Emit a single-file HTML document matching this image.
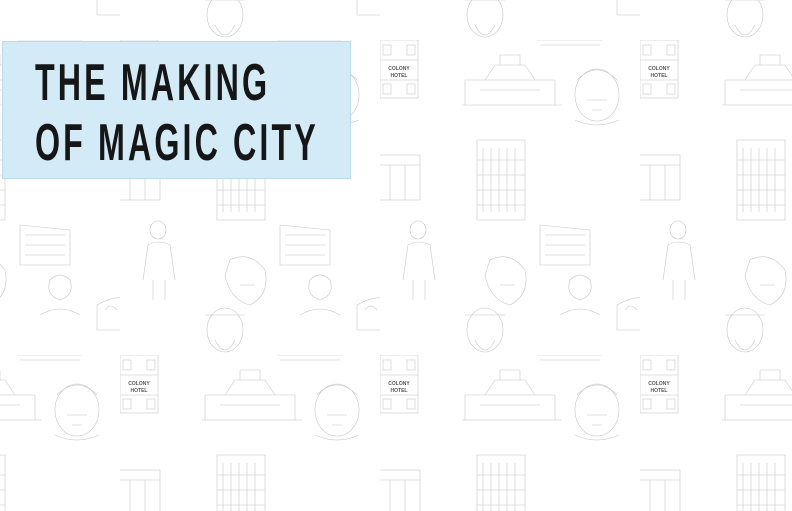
<!DOCTYPE html>
<html><head><meta charset="utf-8"><style>
html,body{margin:0;padding:0;width:792px;height:511px;overflow:hidden;background:#fff}
svg.bg{position:absolute;left:0;top:0}
.box{position:absolute;left:2px;top:41px;width:347px;height:136px;background:#d3eaf7;border:1px solid #b9dcf0}
.t{position:absolute;left:35px;font-family:"Liberation Sans",sans-serif;font-weight:bold;font-size:52px;color:#161616;transform:scaleX(0.62);transform-origin:0 0;letter-spacing:5px;line-height:1;white-space:nowrap}
</style></head><body>
<svg class="bg" width="792" height="511" xmlns="http://www.w3.org/2000/svg">
<defs>
<pattern id="p" x="380" y="40" width="260" height="315" patternUnits="userSpaceOnUse">
<g fill="none" stroke="#c6c6c6" stroke-width="0.6">
<rect x="0" y="0" width="38" height="58"/>
<line x1="0" y1="20" x2="38" y2="20"/><line x1="0" y1="40" x2="38" y2="40"/>
<rect x="3" y="5" width="8" height="10"/><rect x="27" y="5" width="8" height="10"/>
<rect x="3" y="44" width="8" height="10"/><rect x="27" y="44" width="8" height="10"/>
<rect x="97" y="100" width="48" height="80"/>
<path d="M103 108v64M111 108v64M119 108v64M127 108v64M135 108v64M97 120h48M97 135h48M97 150h48M97 165h48"/>
<path d="M82 65h100M85 65v-25h90v25M105 40l10-15h30l10 15M100 50h60M120 25v-10h20v10"/>
<ellipse cx="217" cy="55" rx="22" ry="26"/><path d="M197 40q20-20 40 0M207 60h20M212 70h10M195 80q22 10 44 0"/>
<path d="M157 0h65M160 5h60M160 -5h60"/>
<ellipse cx="105" cy="290" rx="18" ry="22"/><path d="M95 300q10 20 20 0M85 275h40"/>
<rect x="-5" y="115" width="45" height="45"/><path d="M-5 125h45M10 125v35M25 125v35"/>
<path d="M160 185l50 5v35h-50zM165 195h40M165 205h40M165 215h40"/>
<path d="M30 190a8 9 0 1 0 16 0a8 9 0 1 0-16 0M28 205q10-6 22 0l5 35M28 205l-5 35M33 240v20M45 240v20"/>
<path d="M110 220q20-10 35 10q5 25-15 35q-20-5-25-30zM120 245h15"/>
<path d="M190 240q10-10 20 0q5 15-10 20q-15-5-10-20M180 275q20-12 40 0"/>
<path d="M237 265q25-15 50 0v25h-50zM245 270q5-8 12 0"/>
</g>
<text x="19" y="30" font-family="Liberation Sans,sans-serif" font-size="5" font-weight="bold" fill="#555" text-anchor="middle">COLONY</text>
<text x="19" y="37" font-family="Liberation Sans,sans-serif" font-size="5" font-weight="bold" fill="#555" text-anchor="middle">HOTEL</text>
</pattern>
</defs>
<rect width="792" height="511" fill="url(#p)"/>
</svg>
<div class="box"></div>
<div class="t" style="top:57px">THE MAKING</div>
<div class="t" style="top:117px">OF MAGIC CITY</div>
</body></html>
